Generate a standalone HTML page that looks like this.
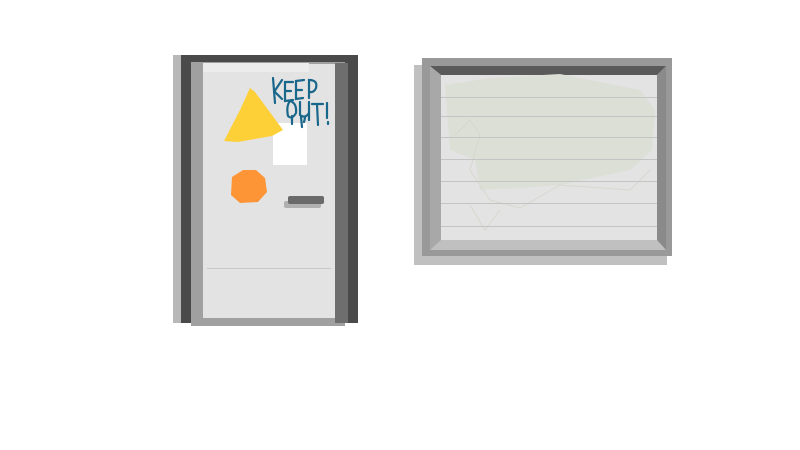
<!DOCTYPE html>
<html><head><style>
body{margin:0;width:800px;height:450px;background:#fff;position:relative;overflow:hidden;font-family:"Liberation Sans",sans-serif}
div{position:absolute}
</style></head><body>
<!-- door -->
<div style="left:173px;top:55px;width:10px;height:268px;background:#b8b8b8"></div>
<div style="left:181px;top:55px;width:177px;height:268px;background:#4a4a4a"></div>
<div style="left:191px;top:62px;width:154px;height:264px;background:#a0a0a0"></div>
<div style="left:335px;top:63px;width:13px;height:260px;background:#6e6e6e"></div>
<div style="left:203px;top:64px;width:132px;height:254px;background:#e3e3e3"></div>
<div style="left:203px;top:63px;width:106px;height:9px;background:#ececec"></div>
<div style="left:207px;top:268px;width:124px;height:1px;background:#c8c8c8"></div>
<div style="left:273px;top:123px;width:34px;height:42px;background:#fff"></div>
<div style="left:284px;top:201px;width:37px;height:7px;background:#b0b0b0;border-radius:2px"></div>
<div style="left:288px;top:196px;width:36px;height:8px;background:#6a6a6a;border-radius:2px"></div>
<svg style="position:absolute;left:0;top:0" width="800" height="450">
<polygon points="250,88 255,92 283,130 272,136 238,142 224,141 240,110" fill="#fdd037"/>
<polygon points="243,170 256,170 265,178 267,192 258,202 240,203 231,195 232,177" fill="#fd9537"/>
<g fill="none" stroke="#1a678c" stroke-width="2.2" stroke-linecap="round">
<path d="M273,78 L275,103 M274,92 L282,80 M275,92 L282,99"/>
<path d="M293,82 L285,82 L285,101 L293,100 M285,91 L291,91"/>
<path d="M304,80 L296,81 L296,99 L303,98 M296,90 L302,90"/>
<path d="M309,98 L309,80 Q318,80 316,88 Q314,93 309,92"/>
<path d="M290,101 Q286,106 288,116 Q292,120 296,113 Q297,103 290,101"/>
<path d="M300,102 L300,115 Q305,119 309,113 L309,102 M309,113 L309,120"/>
<path d="M312,104 L323,104 M317,104 L318,125"/>
<path d="M327,103 L327,118 M328,122 L328,124"/>
<path d="M292,116 L292,124 M301,117 L302,127 M305,118 L304,122"/>
</g>
<!-- window -->
<rect x="414" y="65" width="253" height="200" fill="#c0c0c0"/>
<rect x="422" y="58" width="250" height="198" fill="#999"/>
<polygon points="430,66 666,66 657,75 441,75" fill="#5a5a5a"/>
<polygon points="430,66 441,75 441,240 430,250" fill="#a8a8a8"/>
<polygon points="666,66 666,250 657,240 657,75" fill="#8a8a8a"/>
<polygon points="430,250 441,240 657,240 666,250" fill="#c0c0c0"/>
<rect x="441" y="75" width="216" height="165" fill="#e3e3e3"/>
<path d="M445,85 L490,78 L560,74 L640,90 L655,110 L652,150 L630,170 L560,185 L520,188 L480,190 L475,160 L450,150 Z" fill="#dcdfd6"/>
<path d="M455,135 L470,120 L480,135 L470,170 L490,200 L520,208 L560,185 L630,190 L650,170 M500,210 L485,230 L470,205" fill="none" stroke="#d6d8cf" stroke-width="1"/>
<g stroke="#c4c4c4" stroke-width="1">
<line x1="441" y1="97.5" x2="657" y2="97.5"/><line x1="441" y1="116.5" x2="657" y2="116.5"/>
<line x1="441" y1="137.5" x2="657" y2="137.5"/><line x1="441" y1="159.5" x2="657" y2="159.5"/>
<line x1="441" y1="181.5" x2="657" y2="181.5"/><line x1="441" y1="203.5" x2="657" y2="203.5"/>
<line x1="441" y1="226.5" x2="657" y2="226.5"/>
</g>
</svg>
</body></html>
